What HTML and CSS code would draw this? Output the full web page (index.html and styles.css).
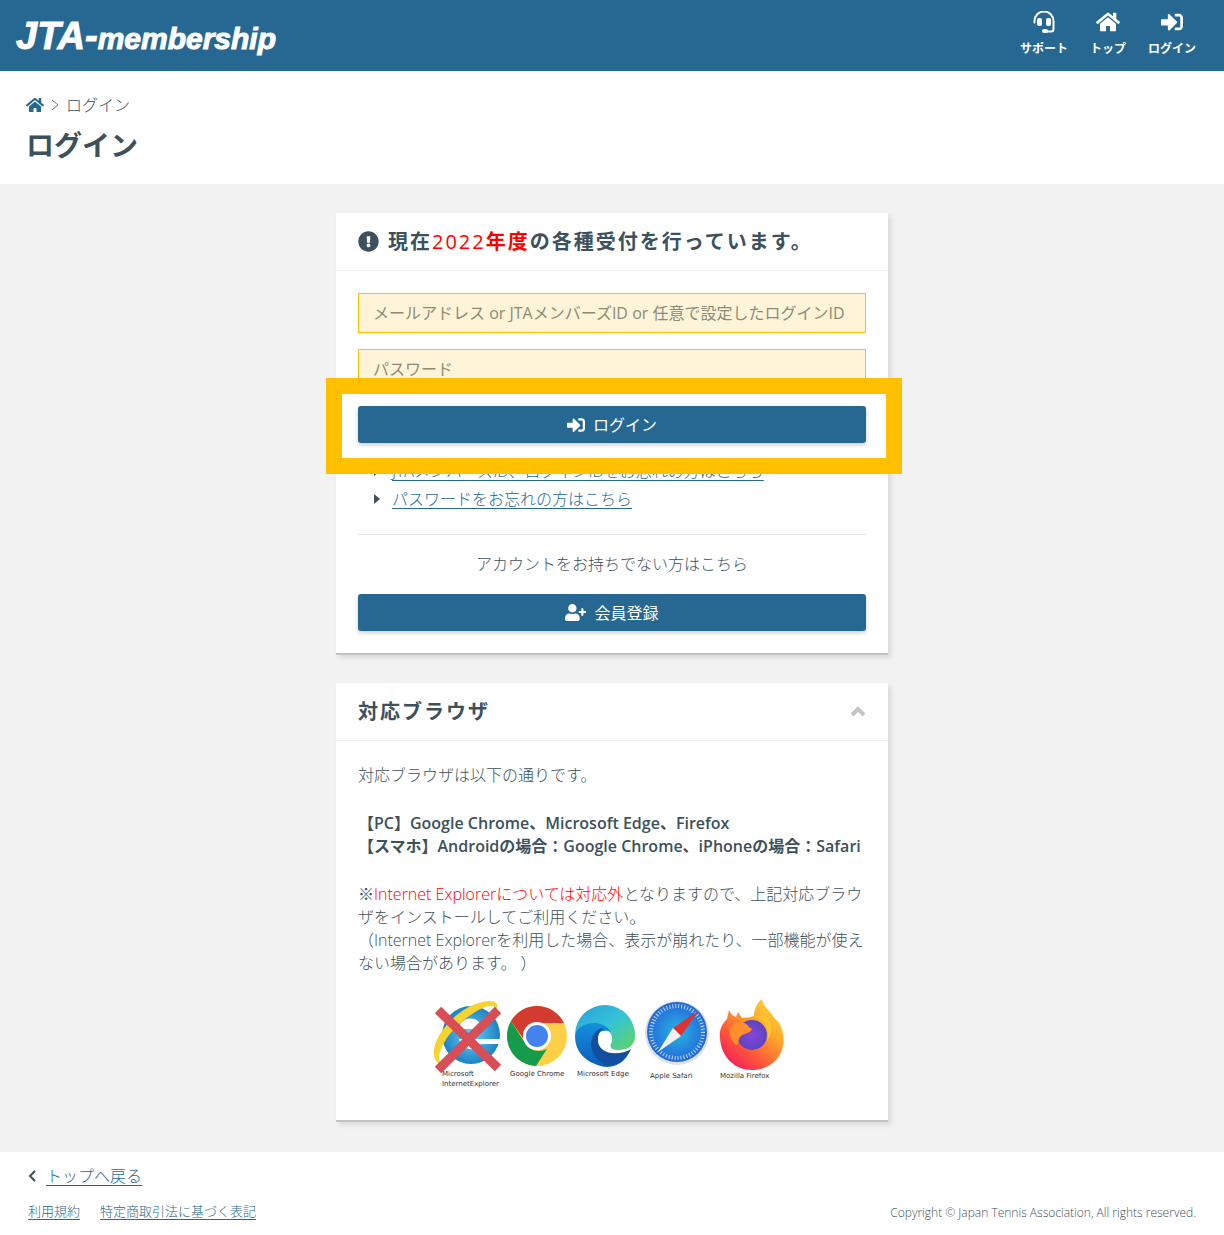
FILE: index.html
```html
<!DOCTYPE html>
<html lang="ja">
<head>
    <meta charset="UTF-8">
    <meta name="viewport" content="width=device-width, initial-scale=1.0">
    <title>ログイン | JTA-membership</title>
    <link rel="stylesheet" href="styles.css">
</head>
<body>
    <!-- Shared icons -->
    <svg class="icon-defs" aria-hidden="true">
        <symbol id="icon-home" viewBox="0 0 576 512">
            <path d="M280.37 148.26L96 300.11V464a16 16 0 0 0 16 16l112.06-.29a16 16 0 0 0 15.92-16V368a16 16 0 0 1 16-16h64a16 16 0 0 1 16 16v95.64a16 16 0 0 0 16 16.05L464 480a16 16 0 0 0 16-16V300L295.67 148.26a12.19 12.19 0 0 0-15.3 0zM571.6 251.47L488 182.56V44.05a12 12 0 0 0-12-12h-56a12 12 0 0 0-12 12v72.61L318.47 43a48 48 0 0 0-61 0L4.34 251.47a12 12 0 0 0-1.6 16.9l25.5 31A12 12 0 0 0 45.15 301l235.22-193.74a12.19 12.19 0 0 1 15.3 0L530.9 301a12 12 0 0 0 16.9-1.6l25.5-31a12 12 0 0 0-1.7-16.93z"/>
        </symbol>
        <symbol id="icon-login" viewBox="0 0 512 512">
            <path d="M416 448h-84c-6.6 0-12-5.4-12-12v-40c0-6.6 5.4-12 12-12h84c17.7 0 32-14.3 32-32V160c0-17.7-14.3-32-32-32h-84c-6.6 0-12-5.4-12-12V76c0-6.6 5.4-12 12-12h84c53 0 96 43 96 96v192c0 53-43 96-96 96zm-47-201L201 79c-15-15-41-4.5-41 17v96H24c-13.3 0-24 10.7-24 24v96c0 13.3 10.7 24 24 24h136v96c0 21.5 26 32 41 17l168-168c9.3-9.4 9.3-24.6 0-34z"/>
        </symbol>
        <symbol id="icon-support" viewBox="0 0 22 22">
            <path d="M1.500 11.500V10a9.500 9.500 0 0 1 19 0v8a2.500 2.500 0 0 1-2.500 2.500H13" fill="none" stroke="currentColor" stroke-width="2" stroke-linecap="round"/>
            <rect x="4" y="7" width="5" height="8" rx="2"/>
            <rect x="13" y="7" width="5" height="8" rx="2"/>
            <rect x="9" y="18" width="6" height="4" rx="2"/>
        </symbol>
    </svg>

    <header class="header">
        <a class="logo" href="#"><span class="logo-main">JTA-</span>membership</a>
        <nav class="header-nav">
            <a href="#"><svg class="nav-icon"><use href="#icon-support"/></svg>サポート</a>
            <a href="#"><svg class="nav-icon nav-home"><use href="#icon-home"/></svg>トップ</a>
            <a href="#"><svg class="nav-icon"><use href="#icon-login"/></svg>ログイン</a>
        </nav>
    </header>

    <div class="page-title">
        <div class="breadcrumb">
            <a href="#" aria-label="トップ"><svg class="home-icon"><use href="#icon-home"/></svg></a>
            <svg class="arrow-icon" viewBox="0 0 8 12"><path d="M1 1l6 5-6 5"/></svg>
            <span>ログイン</span>
        </div>
        <h1>ログイン</h1>
    </div>

    <main class="container">
        <section class="card">
            <div class="card-header">
                <svg class="info-icon" viewBox="0 0 512 512"><path d="M504 256c0 136.997-111.043 248-248 248S8 392.997 8 256C8 119.083 119.043 8 256 8s248 111.083 248 248zm-248 50c-25.405 0-46 20.595-46 46s20.595 46 46 46 46-20.595 46-46-20.595-46-46-46zm-43.673-165.346l7.418 136c.347 6.364 5.609 11.346 11.982 11.346h48.546c6.373 0 11.635-4.982 11.982-11.346l7.418-136c.375-6.874-5.098-12.654-11.982-12.654h-63.383c-6.884 0-12.356 5.78-11.981 12.654z"/></svg>
                <h2>現在<em><span class="year">2022</span>年度</em>の各種受付を行っています。</h2>
            </div>
            <div class="card-body">
                <form class="login-form">
                    <input type="text" name="loginId" aria-label="ログインID" placeholder="メールアドレス or JTAメンバーズID or 任意で設定したログインID">
                    <input type="password" name="password" aria-label="パスワード" placeholder="パスワード">
                    <!-- Framed login button -->
                    <div class="highlight">
                        <button type="button" class="btn"><svg class="btn-icon"><use href="#icon-login"/></svg>ログイン</button>
                    </div>
                </form>
                <ul class="help-links">
                    <li><a href="#">JTAメンバーズID、ログインIDをお忘れの方はこちら</a></li>
                    <li><a href="#">パスワードをお忘れの方はこちら</a></li>
                </ul>
                <div class="register">
                    <p>アカウントをお持ちでない方はこちら</p>
                    <button type="button" class="btn"><svg class="btn-icon user-icon" viewBox="0 0 640 512"><path d="M624 208h-64v-64c0-8.800-7.200-16-16-16h-32c-8.800 0-16 7.200-16 16v64h-64c-8.800 0-16 7.200-16 16v32c0 8.800 7.200 16 16 16h64v64c0 8.800 7.200 16 16 16h32c8.800 0 16-7.200 16-16v-64h64c8.800 0 16-7.200 16-16v-32c0-8.800-7.200-16-16-16zm-400 48c70.700 0 128-57.300 128-128S294.700 0 224 0 96 57.300 96 128s57.300 128 128 128zm89.600 32h-16.700c-22.200 10.200-46.900 16-72.900 16s-50.600-5.800-72.900-16h-16.700C60.200 288 0 348.200 0 422.400V464c0 26.500 21.500 48 48 48h352c26.500 0 48-21.500 48-48v-41.600c0-74.200-60.200-134.400-134.400-134.400z"/></svg>会員登録</button>
                </div>
            </div>
        </section>

        <section class="card">
            <div class="card-header">
                <h2>対応ブラウザ</h2>
                <button type="button" class="toggle" aria-label="閉じる"><svg viewBox="0 0 16 11"><path d="M2 9l6-6 6 6"/></svg></button>
            </div>
            <div class="card-body browser-text">
                <p>対応ブラウザは以下の通りです。</p>
                <p class="strong">【PC】Google Chrome、Microsoft Edge、Firefox<br>【スマホ】Androidの場合：Google Chrome、iPhoneの場合：Safari</p>
                <p>※<span class="red">Internet Explorerについては対応外</span>となりますので、上記対応ブラウザをインストールしてご利用ください。<br>（Internet Explorerを利用した場合、表示が崩れたり、一部機能が使えない場合があります。 ）</p>
                <svg class="browsers" viewBox="2 2 352 90">
                    <defs>
                        <radialGradient id="ie"><stop offset="0" stop-color="#6fd0f5"/><stop offset="1" stop-color="#1b82c4"/></radialGradient>
                        <linearGradient id="edgeTop" x1="0" y1="0" x2="1" y2="1"><stop offset="0" stop-color="#2a9fdc"/><stop offset=".5" stop-color="#35c3d6"/><stop offset="1" stop-color="#62d65a"/></linearGradient>
                        <linearGradient id="edgeLeft" x1="0" y1="0" x2="0" y2="1"><stop offset="0" stop-color="#1490df"/><stop offset="1" stop-color="#0a5cb8"/></linearGradient>
                        <radialGradient id="safari"><stop offset="0" stop-color="#27b6e4"/><stop offset="1" stop-color="#2468d8"/></radialGradient>
                        <linearGradient id="fox" x1="1" y1="0" x2=".2" y2="1"><stop offset="0" stop-color="#ffe63e"/><stop offset=".4" stop-color="#ffa62a"/><stop offset=".7" stop-color="#ff5b38"/><stop offset="1" stop-color="#f0195f"/></linearGradient>
                        <radialGradient id="globe"><stop offset="0" stop-color="#8a45dc"/><stop offset="1" stop-color="#5a45c4"/></radialGradient>
                    </defs>
                    <!-- Internet Explorer -->
                    <circle cx="37" cy="37" r="29" fill="url(#ie)"/>
                    <path d="M25 31a11 10 0 0 1 23 0zM25 41h41v5H47c-5 8-19 7-22-5z" fill="#fff"/>
                    <path d="M6 66C-6 56 4 35 22 19S64 0 62 9C58 3 42 10 26 24S0 57 6 66z" fill="#f7d32d" stroke="#f7d32d" stroke-width="2"/>
                    <path d="M4 12l60 58M64 12L4 72" stroke="#d94d57" stroke-width="9"/>
                    <!-- Chrome -->
                    <circle cx="103" cy="38" r="30" fill="#fcd147"/>
                    <path d="M77 23a30 30 0 0 1 53 2h-27a13 13 0 0 0-12 18z" fill="#d33a30"/>
                    <path d="M77 23a30 30 0 0 0 25 45l11-17c-8 4-18 2-22-6z" fill="#159b4b"/>
                    <circle cx="103" cy="38" r="14" fill="#fff"/>
                    <circle cx="103" cy="38" r="11" fill="#4383f0"/>
                    <!-- Edge -->
                    <path d="M141 36a30 30 0 0 1 60 2c0 10-8 14-16 14-6 0-10-2-8-6 4-9-3-18-16-18-10 0-17 4-20 8z" fill="url(#edgeTop)"/>
                    <path d="M141 38c0-12 26-20 36-4-14-6-20 10-14 20 6 9 18 11 31 3-10 15-25 13-33 9-13-5-20-15-20-28z" fill="url(#edgeLeft)"/>
                    <path d="M167 30c-8 4-12 13-9 22 4 11 13 17 20 15 8-1 16-8 19-16-13 8-34 5-33-10 0-5 2-9 6-10z" fill="#134f9f"/>
                    <!-- Safari -->
                    <circle cx="243" cy="35" r="32" fill="#dde1e5"/>
                    <circle cx="243" cy="34" r="30" fill="url(#safari)"/>
                    <circle cx="243" cy="34" r="26" fill="none" stroke="#b9dcf6" stroke-width="4" stroke-dasharray="1 2"/>
                    <path d="M264 13l-17 25-8-8z" fill="#e2302f"/>
                    <path d="M224 54l15-24 8 8z" fill="#f2f2f2"/>
                    <!-- Firefox -->
                    <path d="M286 40c-1-8 2-14 7-19l2-9c2 4 4 6 7 7l2-5 4 6c4 0 8-1 12-2 0-7 3-13 8-17 1 8 9 12 13 20l3 2c6 9 7 20 4 29-4 12-16 20-30 20-17 0-31-13-32-32z" fill="url(#fox)"/>
                    <circle cx="318" cy="37" r="15" fill="url(#globe)"/>
                    <path d="M297 28c6-6 14-5 18 1l3 2c-2 5-8 4-11 7-4 4-1 8-5 9-5-5-8-12-5-19z" fill="#ff8d2b"/>
                    <path d="M318 19c9 0 19 8 15 24 7-9 5-20-3-26z" fill="#ffc32f"/>
                    <g class="browser-name">
                        <text x="8" y="78">Microsoft</text>
                        <text x="8" y="88">InternetExplorer</text>
                        <text x="76" y="78">Google Chrome</text>
                        <text x="143" y="78">Microsoft Edge</text>
                        <text x="216" y="80">Apple Safari</text>
                        <text x="286" y="80">Mozilla Firefox</text>
                    </g>
                </svg>
            </div>
        </section>
    </main>

    <footer class="footer">
        <div class="back">
            <svg viewBox="0 0 8 12"><path d="M7 1L2 6l5 5"/></svg>
            <a href="#">トップへ戻る</a>
        </div>
        <div class="footer-bottom">
            <div class="footer-links">
                <a href="#">利用規約</a>
                <a href="#">特定商取引法に基づく表記</a>
            </div>
            <small>Copyright © Japan Tennis Association, All rights reserved.</small>
        </div>
    </footer>
</body>
</html>
```
FILE: styles.css
```css
* {
    box-sizing: border-box;
}
body {
    font-family: "Open Sans", "Noto Sans CJK JP", sans-serif;
    font-size: 16px;
    font-weight: 300;
    line-height: 24px;
    color: #3c515b;
    background-color: #ffffff;
    margin: 0;
}
h1, h2, p, ul {
    margin: 0;
    padding: 0;
}
a {
    color: #276893;
    text-underline-offset: 3px;
}
svg {
    fill: currentColor;
    flex-shrink: 0;
}
.icon-defs {
    display: none;
}

/* Header */
.header {
    display: flex;
    justify-content: space-between;
    align-items: center;
    height: 71px;
    padding: 0 28px 0 16px;
    background-color: #276893;
}
.logo {
    padding-top: 4px;
    color: #ffffff;
    font-family: "Liberation Sans", Arial, sans-serif;
    font-size: 30px;
    font-style: italic;
    font-weight: 700;
    line-height: 40px;
    text-decoration: none;
    -webkit-text-stroke: 1px #ffffff;
}
.logo-main {
    font-size: 38px;
}
.header-nav {
    display: flex;
    gap: 22px;
}
.header-nav a {
    display: flex;
    flex-direction: column;
    align-items: center;
    gap: 4px;
    color: #ffffff;
    font-size: 12px;
    font-weight: 700;
    text-decoration: none;
}
.nav-icon {
    width: 22px;
    height: 22px;
}
.nav-home {
    width: 24px;
}

/* Title area */
.page-title {
    height: 113px;
    padding: 22px 26px;
}
.breadcrumb {
    display: flex;
    align-items: center;
    gap: 7px;
}
.breadcrumb a {
    display: flex;
}
.home-icon {
    width: 18px;
    height: 16px;
}
.arrow-icon {
    width: 8px;
    height: 12px;
    fill: none;
    stroke: #6b787e;
}
.page-title h1 {
    font-size: 28px;
    font-weight: 700;
    line-height: 40px;
    margin-top: 8px;
}

/* Cards */
.container {
    display: flex;
    flex-direction: column;
    align-items: center;
    gap: 28px;
    padding: 29px 16px 30px;
    background-color: #f2f2f2;
}
.card {
    width: 100%;
    max-width: 552px;
    background-color: #ffffff;
    border-bottom: 2px solid #bfc3c4;
    box-shadow: 3px 3px 5px rgba(0, 0, 0, 0.1);
}
.card-header {
    display: flex;
    align-items: center;
    gap: 9px;
    height: 58px;
    padding: 0 22px;
    border-bottom: 1px solid #eeeeee;
}
.card-header h2 {
    flex: 1;
    font-size: 20px;
    font-weight: 700;
    letter-spacing: 2px;
    line-height: 32px;
}
.card-header em {
    color: #ff0000;
    font-style: normal;
}
.year {
    font-weight: 400;
}
.info-icon {
    width: 21px;
    height: 21px;
}
.toggle {
    display: flex;
    padding: 0;
    border: none;
    background: none;
    cursor: pointer;
}
.toggle svg {
    width: 16px;
    height: 11px;
    fill: none;
    stroke: #c4c4c4;
    stroke-width: 4;
}
.card-body {
    padding: 22px;
}

/* Login form */
.login-form {
    display: flex;
    flex-direction: column;
    gap: 16px;
}
.login-form input {
    width: 100%;
    height: 40px;
    padding: 0 14px;
    border: 1px solid #ffc000;
    background-color: #fff4d8;
    color: #3c515b;
    font: inherit;
    font-weight: 400;
}
.login-form input::placeholder {
    color: #8c8b78;
    opacity: 1;
}
.highlight {
    position: relative;
    padding-top: 1px;
}
.highlight::before {
    content: "";
    position: absolute;
    top: -27px;
    right: -36px;
    bottom: -31px;
    left: -32px;
    border: 16px solid #ffc000;
    background-color: #ffffff;
}
.btn {
    position: relative;
    display: flex;
    justify-content: center;
    align-items: center;
    gap: 8px;
    width: 100%;
    height: 37px;
    border: none;
    border-radius: 3px;
    background-color: #276893;
    box-shadow: 0 2px 4px rgba(0, 0, 0, 0.2);
    color: #ffffff;
    font: inherit;
    font-weight: 400;
    cursor: pointer;
}
.btn-icon {
    width: 18px;
    height: 18px;
}
.user-icon {
    width: 21px;
    height: 17px;
}
.help-links {
    margin-top: 14px;
    padding-bottom: 21px;
    border-bottom: 1px solid #e6e6e6;
    list-style: none;
}
.help-links li {
    display: flex;
    align-items: center;
    gap: 12px;
    padding-left: 16px;
    line-height: 28px;
}
.help-links li::before {
    content: "";
    border-left: 6px solid #3c515b;
    border-top: 5px solid transparent;
    border-bottom: 5px solid transparent;
}
.register {
    padding-top: 17px;
    text-align: center;
}
.register p {
    margin-bottom: 18px;
}

/* Supported browsers */
.browser-text {
    line-height: 23px;
    padding: 23px 22px 30px;
}
.browser-text p {
    margin-bottom: 25px;
}
.strong {
    font-weight: 600;
}
.red {
    color: #ff0000;
}
.browsers {
    display: block;
    width: 352px;
    max-width: 100%;
    margin: 0 auto;
    overflow: visible;
}
.browser-name {
    fill: #333333;
    font-family: "DejaVu Sans", sans-serif;
    font-size: 7px;
    font-weight: 400;
}

/* Footer */
.footer {
    padding: 12px 28px;
}
.back {
    display: flex;
    align-items: center;
    gap: 10px;
}
.back svg {
    width: 8px;
    height: 12px;
    fill: none;
    stroke: #3c515b;
    stroke-width: 2;
}
.footer-bottom {
    display: flex;
    justify-content: space-between;
    margin-top: 11px;
    font-size: 13px;
}
.footer-links {
    display: flex;
    gap: 20px;
}
.footer small {
    font-size: 12px;
    line-height: 28px;
}
```
